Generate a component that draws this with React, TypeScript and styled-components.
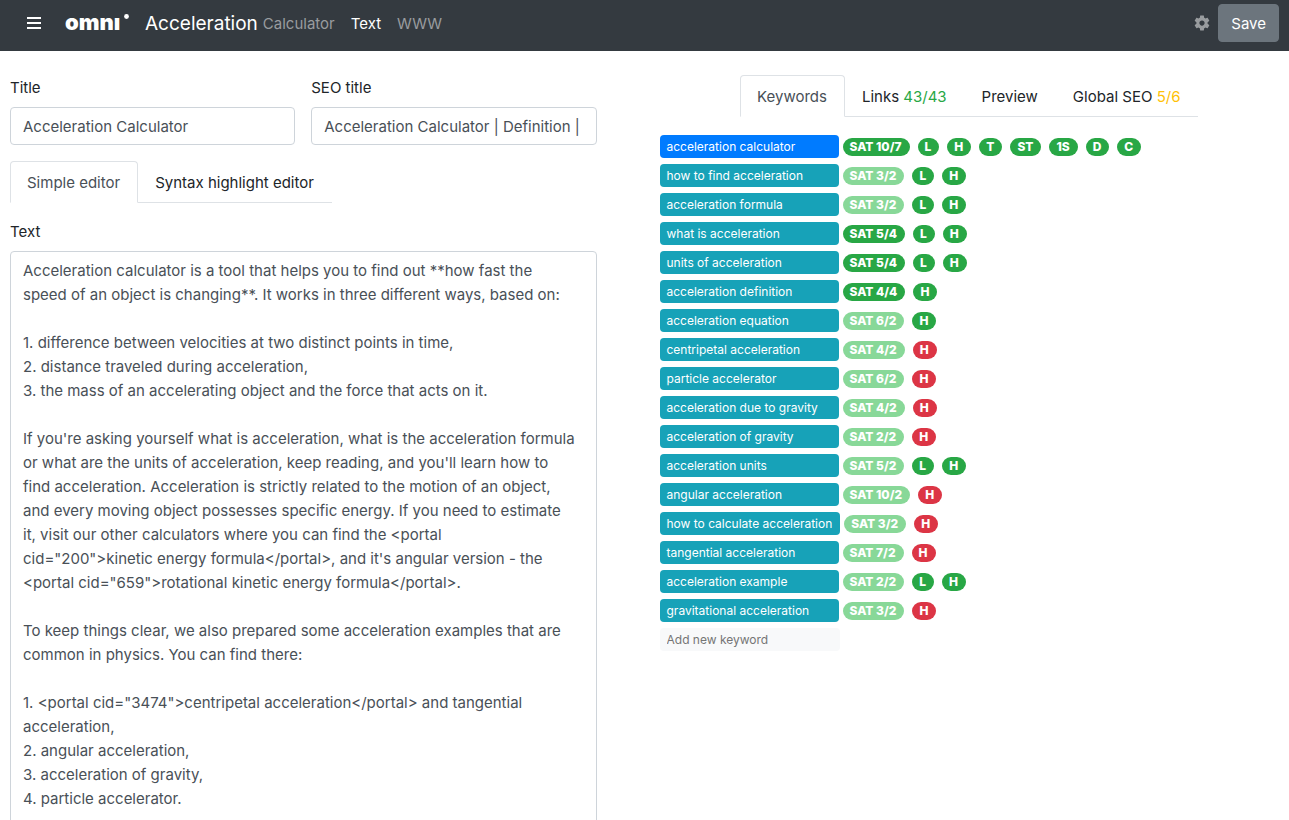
import React, { useState } from "react";
import styled, { createGlobalStyle } from "styled-components";

const GlobalStyle = createGlobalStyle`
  *, *::before, *::after { box-sizing: border-box; }
  body {
    margin: 0;
    background: #fff;
    color: #212529;
    font-family: Inter, "Liberation Sans", sans-serif;
    font-size: 15px;
    line-height: 24px;
  }
  button, input, textarea { font: inherit; margin: 0; }
`;

const Shell = styled.div`
  display: flex;
  flex-direction: column;
  height: 100vh;
  overflow: hidden;
`;

const Navbar = styled.header`
  display: flex;
  align-items: center;
  flex: none;
  height: 51px;
  padding: 0 10px 5px 24px;
  background: #343a40;
`;

const IconButton = styled.button`
  display: flex;
  padding: 0;
  border: 0;
  background: none;
  color: ${(p) => p.color};
  cursor: pointer;
`;

const Logo = styled.a`
  display: flex;
  margin: 0 10px 0 21px;
`;

const PageName = styled.h1`
  margin: 0 5px 0 0;
  color: #fff;
  font-size: 19px;
  font-weight: 400;
  line-height: 30px;
`;

const NavGroup = styled.div`
  display: flex;
  align-items: center;
  flex: 1;
  padding-top: 2px;
`;

const NavLinks = styled.nav`
  display: flex;
  gap: 16px;
`;

const NavLink = styled.a<{ $active?: boolean }>`
  color: ${(p) => (p.$active ? "#fff" : "#999c9f")};
  text-decoration: none;
`;

const SaveButton = styled.button`
  height: 38px;
  margin-left: 7px;
  padding: 1px 12px 0;
  border: 1px solid #6c757d;
  border-radius: 4px;
  background: #6c757d;
  color: #fff;
  cursor: pointer;
`;

const Main = styled.main`
  display: grid;
  grid-template-columns: 1fr 1fr;
  flex: 1;
  min-height: 0;
  padding: 24px 10px 0;
`;

const EditorColumn = styled.section`
  display: flex;
  flex-direction: column;
  min-width: 0;
  padding-right: 48px;
`;

const SeoColumn = styled.section`
  min-width: 0;
  padding-left: 15px;
`;

const FieldRow = styled.div`
  display: grid;
  grid-template-columns: 1fr 1fr;
  gap: 16px;
  margin-bottom: 16px;
`;

const Field = styled.div`
  display: flex;
  flex-direction: column;
  min-width: 0;
  gap: 7px;
  padding-top: 1px;
`;

const TextField = styled(Field)`
  margin-top: 16px;
`;

const TextInput = styled.input`
  width: 100%;
  height: 38px;
  padding: 6px 12px;
  border: 1px solid #ced4da;
  border-radius: 4px;
  background: #fff;
  color: #495057;
`;

const TextArea = styled.textarea`
  display: block;
  width: 100%;
  padding: 7px 20px 7px 12px;
  border: 1px solid #ced4da;
  border-radius: 4px;
  color: #495057;
  resize: none;
  overflow: hidden;
`;

const TabBar = styled.div<{ $centered?: boolean }>`
  display: flex;
  width: fit-content;
  margin: ${(p) => (p.$centered ? "0 auto 18px" : "0")};
  border-bottom: 1px solid #dee2e6;
`;

const Tab = styled.button<{ $active: boolean }>`
  height: 42px;
  margin-bottom: -1px;
  padding: 1px 17px 0 16px;
  border: 1px solid;
  border-color: ${(p) => (p.$active ? "#dee2e6 #dee2e6 #fff" : "transparent")};
  border-radius: 4px 4px 0 0;
  background: ${(p) => (p.$active ? "#fff" : "none")};
  color: ${(p) => (p.$active ? "#495057" : "#212529")};
  white-space: nowrap;
  cursor: pointer;
`;

const Count = styled.span<{ $tone: "good" | "warn" }>`
  color: ${(p) => (p.$tone === "good" ? "#28a745" : "#ffc107")};
`;

const KeywordList = styled.ul`
  display: flex;
  flex-direction: column;
  gap: 6px;
  margin: 0;
  padding: 0;
  list-style: none;
`;

const KeywordRow = styled.li`
  display: flex;
  align-items: center;
  height: 23px;
`;

const KeywordButton = styled.button<{ $main?: boolean }>`
  min-width: 179px;
  height: 23px;
  padding: 0 8px 0 7px;
  border: 0;
  border-radius: 4px;
  background: ${(p) => (p.$main ? "#007bff" : "#17a2b8")};
  color: #fff;
  font-size: 12px;
  line-height: 18px;
  text-align: left;
  white-space: nowrap;
  cursor: pointer;
`;

const badgeColors = { good: "#28a745", over: "#88d898", bad: "#dc3545" };

const Badge = styled.span<{ $tone: keyof typeof badgeColors }>`
  height: 18px;
  margin-right: 4px;
  margin-left: 4px;
  padding: 0 8px 0 7px;
  border-radius: 9px;
  background: ${(p) => badgeColors[p.$tone]};
  color: #fff;
  font-size: 12px;
  font-weight: 800;
  line-height: 18px;
`;

const NewKeyword = styled.input`
  width: 180px;
  height: 23px;
  padding: 0 7px;
  border: 0;
  border-radius: 4px;
  background: #f8f9fa;
  color: #495057;
  font-size: 12px;
  &::placeholder { color: #757575; opacity: 1; }
`;

type Keyword = { name: string; sat: string; ok?: boolean; tags: string[]; bad?: boolean };

const keywords: Keyword[] = [
  { name: "acceleration calculator", sat: "10/7", ok: true, tags: ["L", "H", "T", "ST", "1S", "D", "C"] },
  { name: "how to find acceleration", sat: "3/2", tags: ["L", "H"] },
  { name: "acceleration formula", sat: "3/2", tags: ["L", "H"] },
  { name: "what is acceleration", sat: "5/4", ok: true, tags: ["L", "H"] },
  { name: "units of acceleration", sat: "5/4", ok: true, tags: ["L", "H"] },
  { name: "acceleration definition", sat: "4/4", ok: true, tags: ["H"] },
  { name: "acceleration equation", sat: "6/2", tags: ["H"] },
  { name: "centripetal acceleration", sat: "4/2", tags: ["H"], bad: true },
  { name: "particle accelerator", sat: "6/2", tags: ["H"], bad: true },
  { name: "acceleration due to gravity", sat: "4/2", tags: ["H"], bad: true },
  { name: "acceleration of gravity", sat: "2/2", tags: ["H"], bad: true },
  { name: "acceleration units", sat: "5/2", tags: ["L", "H"] },
  { name: "angular acceleration", sat: "10/2", tags: ["H"], bad: true },
  { name: "how to calculate acceleration", sat: "3/2", tags: ["H"], bad: true },
  { name: "tangential acceleration", sat: "7/2", tags: ["H"], bad: true },
  { name: "acceleration example", sat: "2/2", tags: ["L", "H"] },
  { name: "gravitational acceleration", sat: "3/2", tags: ["H"], bad: true },
];

const articleText = `Acceleration calculator is a tool that helps you to find out **how fast the speed of an object is changing**. It works in three different ways, based on:

1. difference between velocities at two distinct points in time,
2. distance traveled during acceleration,
3. the mass of an accelerating object and the force that acts on it.

If you're asking yourself what is acceleration, what is the acceleration formula or what are the units of acceleration, keep reading, and you'll learn how to find acceleration. Acceleration is strictly related to the motion of an object, and every moving object possesses specific energy. If you need to estimate it, visit our other calculators where you can find the <portal cid="200">kinetic energy formula</portal>, and it's angular version - the <portal cid="659">rotational kinetic energy formula</portal>.

To keep things clear, we also prepared some acceleration examples that are common in physics. You can find there:

1. <portal cid="3474">centripetal acceleration</portal> and tangential acceleration,
2. angular acceleration,
3. acceleration of gravity,
4. particle accelerator.
`;

const editorTabs = ["Simple editor", "Syntax highlight editor"];

const seoTabs: { label: string; count?: string; tone?: "good" | "warn" }[] = [
  { label: "Keywords" },
  { label: "Links", count: "43/43", tone: "good" },
  { label: "Preview" },
  { label: "Global SEO", count: "5/6", tone: "warn" },
];

export default function App() {
  const [editorTab, setEditorTab] = useState(0);
  const [seoTab, setSeoTab] = useState(0);

  return (
    <Shell>
      <GlobalStyle />
      <Navbar>
        <IconButton type="button" color="#fff" aria-label="Menu">
          <svg width="20" height="20" viewBox="0 0 20 20" fill="currentColor">
            <rect x="3" y="4" width="14" height="2" />
            <rect x="3" y="9" width="14" height="2" />
            <rect x="3" y="14" width="14" height="2" />
          </svg>
        </IconButton>
        <Logo href="#" aria-label="Omni">
          <svg width="70" height="36" viewBox="0 0 70 36" fill="#fff">
            <text x="0" y="25" fontFamily="Inter, sans-serif" fontSize="22" fontWeight="900">
              omnı
            </text>
            <circle cx="61.5" cy="11.5" r="2.4" />
          </svg>
        </Logo>
        <NavGroup>
          <PageName>Acceleration</PageName>
          <NavLinks>
            <NavLink href="#">Calculator</NavLink>
            <NavLink href="#" $active>Text</NavLink>
            <NavLink href="#">WWW</NavLink>
          </NavLinks>
        </NavGroup>
        <IconButton type="button" color="#999c9f" aria-label="Settings">
          <svg width="18" height="18" viewBox="0 0 24 24" fill="currentColor">
            <path d="M19.43 12.98c.04-.32.07-.64.07-.98s-.03-.66-.07-.98l2.11-1.65c.19-.15.24-.42.12-.64l-2-3.46c-.12-.22-.39-.3-.61-.22l-2.49 1c-.52-.4-1.08-.73-1.69-.98l-.38-2.65C14.46 2.18 14.25 2 14 2h-4c-.25 0-.46.18-.49.42l-.38 2.65c-.61.25-1.17.59-1.69.98l-2.49-1c-.23-.09-.49 0-.61.22l-2 3.46c-.13.22-.07.49.12.64l2.11 1.65c-.04.32-.07.65-.07.98s.03.66.07.98l-2.11 1.65c-.19.15-.24.42-.12.64l2 3.46c.12.22.39.3.61.22l2.49-1c.52.4 1.08.73 1.69.98l.38 2.65c.03.24.24.42.49.42h4c.25 0 .46-.18.49-.42l.38-2.65c.61-.25 1.17-.59 1.69-.98l2.49 1c.23.09.49 0 .61-.22l2-3.46c.12-.22.07-.49-.12-.64l-2.11-1.65zM12 15.5c-1.93 0-3.5-1.57-3.5-3.5s1.57-3.5 3.5-3.5 3.5 1.57 3.5 3.5-1.57 3.5-3.5 3.5z" />
          </svg>
        </IconButton>
        <SaveButton type="button">Save</SaveButton>
      </Navbar>

      <Main>
        <EditorColumn>
          <FieldRow>
            <Field>
              <label htmlFor="title">Title</label>
              <TextInput id="title" defaultValue="Acceleration Calculator" />
            </Field>
            <Field>
              <label htmlFor="seo-title">SEO title</label>
              <TextInput id="seo-title" defaultValue="Acceleration Calculator | Definition |" />
            </Field>
          </FieldRow>
          <TabBar role="tablist">
            {editorTabs.map((label, i) => (
              <Tab key={label} type="button" role="tab" aria-selected={i === editorTab} $active={i === editorTab} onClick={() => setEditorTab(i)}>
                {label}
              </Tab>
            ))}
          </TabBar>
          <TextField>
            <label htmlFor="text">Text</label>
            <TextArea id="text" rows={26} defaultValue={articleText} spellCheck={false} />
          </TextField>
        </EditorColumn>

        <SeoColumn>
          <TabBar role="tablist" $centered>
            {seoTabs.map((tab, i) => (
              <Tab key={tab.label} type="button" role="tab" aria-selected={i === seoTab} $active={i === seoTab} onClick={() => setSeoTab(i)}>
                {tab.label}
                {tab.count && tab.tone && <> <Count $tone={tab.tone}>{tab.count}</Count></>}
              </Tab>
            ))}
          </TabBar>
          <KeywordList>
            {keywords.map((k, i) => (
              <KeywordRow key={k.name}>
                <KeywordButton type="button" $main={i === 0}>{k.name}</KeywordButton>
                <Badge $tone={k.ok ? "good" : "over"}>SAT {k.sat}</Badge>
                {k.tags.map((tag) => (
                  <Badge key={tag} $tone={k.bad ? "bad" : "good"}>{tag}</Badge>
                ))}
              </KeywordRow>
            ))}
            <KeywordRow>
              <NewKeyword aria-label="Add new keyword" placeholder="Add new keyword" />
            </KeywordRow>
          </KeywordList>
        </SeoColumn>
      </Main>
    </Shell>
  );
}
